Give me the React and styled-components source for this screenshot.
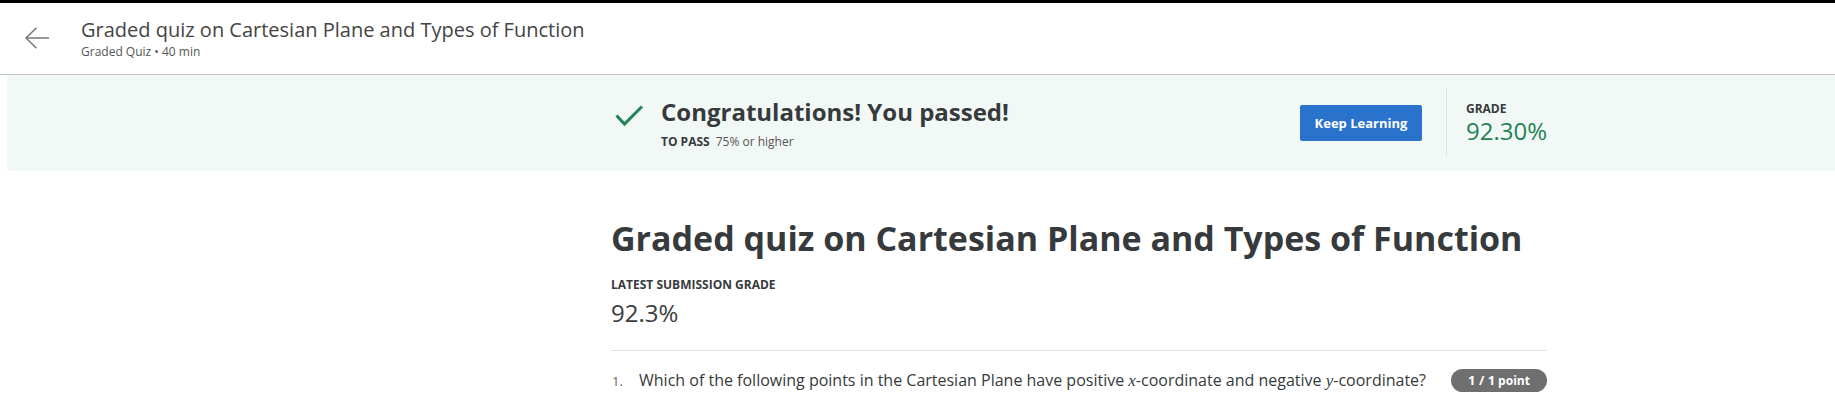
import React from 'react';
import styled, { createGlobalStyle } from 'styled-components';

const GlobalStyle = createGlobalStyle`
  html, body {
    margin: 0;
    padding: 0;
    background: #ffffff;
  }

  body {
    font-family: 'Open Sans', 'Liberation Sans', sans-serif;
    color: #373a3c;
  }
`;

const TEXT = '#373a3c';
const GREEN = '#1f8354';

const TopStrip = styled.div`
  height: 3px;
  background: #000000;
`;

const Header = styled.header`
  display: flex;
  align-items: flex-start;
  gap: 32px;
  box-sizing: border-box;
  height: 72px;
  padding: 12px 0 0 25px;
  border-bottom: 1px solid #c4c4c4;
`;

const BackButton = styled.button`
  display: flex;
  margin-top: 12px;
  padding: 0;
  border: 0;
  background: none;
  color: #6f6f6f;
  cursor: pointer;
`;

const HeaderTitle = styled.h1`
  margin: 0;
  font-size: 20px;
  line-height: 24px;
  font-weight: 400;
  color: #444444;
  padding-top: 3px;
`;

const HeaderMeta = styled.div`
  margin-top: 2px;
  font-size: 12px;
  line-height: 16px;
  color: #555555;
`;

const Track = styled.div`
  display: grid;
  grid-template-columns: ${({ $lead }) => $lead}px 936px 1fr;

  & > * {
    grid-column: 2;
  }
`;

const Banner = styled(Track)`
  margin-left: 7px;
  height: 96px;
  align-items: center;
  background: #f2f8f6;
`;

const BannerRow = styled.div`
  display: flex;
  align-items: center;
`;

const PassGroup = styled.div`
  display: flex;
  align-items: flex-start;
  gap: 18px;
  padding-left: 4px;
`;

const CheckIcon = styled.svg`
  margin-top: 9px;
  flex-shrink: 0;
`;

const PassTitle = styled.div`
  font-size: 24px;
  line-height: 32px;
  font-weight: 700;
  color: ${TEXT};
`;

const PassNote = styled.div`
  margin-top: 6px;
  font-size: 12px;
  line-height: 16px;
  color: #555555;

  strong {
    margin-right: 6px;
    font-weight: 700;
    color: ${TEXT};
  }
`;

const ResultGroup = styled.div`
  display: flex;
  align-items: center;
  margin-left: auto;
`;

const KeepButton = styled.button`
  width: 122px;
  height: 36px;
  margin-right: 24px;
  border: 0;
  border-radius: 2px;
  background: #2a73cc;
  color: #ffffff;
  font-family: 'Open Sans', 'Liberation Sans', sans-serif;
  font-size: 13px;
  font-weight: 700;
  cursor: pointer;
`;

const Divider = styled.div`
  width: 1px;
  height: 68px;
  background: #dfe3e2;
`;

const GradeBox = styled.div`
  padding-left: 19px;
`;

const Caps = styled.div`
  font-size: 12px;
  line-height: 14px;
  font-weight: 700;
  text-transform: uppercase;
  color: ${TEXT};
`;

const BigNumber = styled.div`
  margin-top: ${({ $gap }) => $gap}px;
  font-size: 24px;
  line-height: 28px;
  font-weight: 400;
  color: ${({ $color }) => $color};
`;

const Main = styled(Track)`
  padding-top: 45px;
`;

const QuizTitle = styled.h2`
  margin: 0 0 18px;
  font-size: 34px;
  line-height: 44px;
  font-weight: 700;
  color: ${TEXT};
`;

const Rule = styled.hr`
  margin: 23px 0 0;
  border: 0;
  height: 1px;
  background: #e3e3e3;
`;

const QuestionRow = styled.div`
  display: flex;
  align-items: center;
  padding-top: 17px;
`;

const QuestionNumber = styled.span`
  width: 27px;
  flex-shrink: 0;
  padding-left: 1px;
  font-size: 13px;
  color: #666666;
`;

const QuestionText = styled.span`
  flex: 1;
  font-size: 16px;
  line-height: 24px;
  color: ${TEXT};
`;

const MathVar = styled.i`
  font-family: 'Liberation Serif', 'DejaVu Serif', serif;
  font-size: 17px;
`;

const PointBadge = styled.span`
  display: inline-flex;
  align-items: baseline;
  justify-content: center;
  gap: 3px;
  width: 96px;
  height: 23px;
  line-height: 23px;
  border-radius: 12px;
  background: #6f6f6f;
  color: #ffffff;
  font-size: 13px;
  font-weight: 700;

  small {
    font-size: 12px;
  }
`;

function ArrowLeft() {
  return (
    <svg width="24" height="22" viewBox="0 0 24 22" fill="none" stroke="currentColor" strokeWidth="1.4">
      <path d="M1 11h23" />
      <path d="M11.5 0.8L1 11l10.5 10.2" />
    </svg>
  );
}

export default function App() {
  return (
    <>
      <GlobalStyle />
      <TopStrip />
      <Header>
        <BackButton aria-label="Back">
          <ArrowLeft />
        </BackButton>
        <div>
          <HeaderTitle>Graded quiz on Cartesian Plane and Types of Function</HeaderTitle>
          <HeaderMeta>Graded Quiz • 40 min</HeaderMeta>
        </div>
      </Header>

      <Banner $lead={604}>
        <BannerRow>
          <PassGroup>
            <CheckIcon width="28" height="22" viewBox="0 0 28 22" fill="none">
              <path d="M1.5 10.5l8 8.5L27 1.5" stroke={GREEN} strokeWidth="3" />
            </CheckIcon>
            <div>
              <PassTitle>Congratulations! You passed!</PassTitle>
              <PassNote>
                <strong>TO PASS</strong>75% or higher
              </PassNote>
            </div>
          </PassGroup>
          <ResultGroup>
            <KeepButton>Keep Learning</KeepButton>
            <Divider />
            <GradeBox>
              <Caps>Grade</Caps>
              <BigNumber $gap={1} $color={GREEN}>92.30%</BigNumber>
            </GradeBox>
          </ResultGroup>
        </BannerRow>
      </Banner>

      <Main $lead={611}>
        <div>
          <QuizTitle>Graded quiz on Cartesian Plane and Types of Function</QuizTitle>
          <Caps>Latest Submission Grade</Caps>
          <BigNumber $gap={7} $color="#3d3d3d">92.3%</BigNumber>
          <Rule />
          <QuestionRow>
            <QuestionNumber>1.</QuestionNumber>
            <QuestionText>
              Which of the following points in the Cartesian Plane have positive <MathVar>x</MathVar>-coordinate
              and negative <MathVar>y</MathVar>-coordinate?
            </QuestionText>
            <PointBadge>
              1 / 1 <small>point</small>
            </PointBadge>
          </QuestionRow>
        </div>
      </Main>
    </>
  );
}
